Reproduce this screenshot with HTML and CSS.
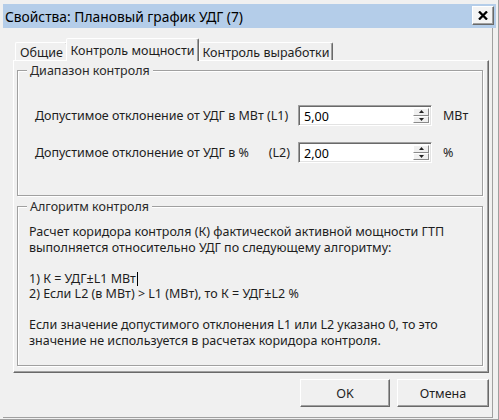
FILE: index.html
```html
<!DOCTYPE html>
<html lang="ru">
<head>
<meta charset="utf-8">
<title>Свойства: Плановый график УДГ (7)</title>
<link rel="stylesheet" href="styles.css">
</head>
<body>
<div class="window">
  <div class="titlebar">
    <span class="title">Свойства: Плановый график УДГ (7)</span>
    <button class="close" aria-label="Закрыть">
      <svg width="10" height="9" viewBox="0 0 10 9"><path d="M1 0.5 L9 8.5 M9 0.5 L1 8.5" stroke="#000" stroke-width="2.3" fill="none"/></svg>
    </button>
  </div>
  <div class="client">
    <div class="tabs">
      <div class="tab tab-general">Общие</div>
      <div class="tab tab-power active">Контроль мощности</div>
      <div class="tab tab-output">Контроль выработки</div>
    </div>
    <div class="panel">
      <div class="group group-range">
        <div class="legend">Диапазон контроля</div>
        <div class="rows">
          <div class="row">
            <div class="label"><span>Допустимое отклонение от УДГ в МВт (L1)</span></div>
            <div class="spin">
              <span class="value">5,00</span>
              <div class="spin-btns">
                <span class="spin-btn"><svg width="5" height="3" viewBox="0 0 5 3"><path d="M2.5 0 L5 3 L0 3 Z" fill="#222"/></svg></span>
                <span class="spin-btn"><svg width="5" height="3" viewBox="0 0 5 3"><path d="M0 0 L5 0 L2.5 3 Z" fill="#222"/></svg></span>
              </div>
            </div>
            <div class="unit">МВт</div>
          </div>
          <div class="row">
            <div class="label"><span>Допустимое отклонение от УДГ в %</span><span>(L2)</span></div>
            <div class="spin">
              <span class="value">2,00</span>
              <div class="spin-btns">
                <span class="spin-btn"><svg width="5" height="3" viewBox="0 0 5 3"><path d="M2.5 0 L5 3 L0 3 Z" fill="#222"/></svg></span>
                <span class="spin-btn"><svg width="5" height="3" viewBox="0 0 5 3"><path d="M0 0 L5 0 L2.5 3 Z" fill="#222"/></svg></span>
              </div>
            </div>
            <div class="unit">%</div>
          </div>
        </div>
      </div>
      <div class="group group-algo">
        <div class="legend">Алгоритм контроля</div>
        <div class="algo">
          <p>Расчет коридора контроля (К) фактической активной мощности ГТП<br>выполняется относительно УДГ по следующему алгоритму:</p>
          <p>1) К = УДГ±L1 МВт<span class="caret"></span><br>2) Если L2 (в МВт) &gt; L1 (МВт), то К = УДГ±L2 %</p>
          <p>Если значение допустимого отклонения L1 или L2 указано 0, то это<br>значение не используется в расчетах коридора контроля.</p>
        </div>
      </div>
    </div>
    <div class="buttons">
      <button class="btn btn-ok">OK</button>
      <button class="btn btn-cancel">Отмена</button>
    </div>
  </div>
</div>
</body>
</html>
```

FILE: styles.css
```css
* { box-sizing: border-box; }
html, body { margin: 0; padding: 0; }
body {
  width: 499px;
  height: 420px;
  overflow: hidden;
  background: #f0f0f0;
  font-family: "Noto Sans", "DejaVu Sans", sans-serif;
  font-size: 12.5px;
  color: #1e1e1e;
}
.window {
  width: 499px;
  height: 420px;
  padding: 4px 2px 1px 3px;
  background: #f0f0f0;
  border-right: 1px solid #a0a0a0;
  border-bottom: 1px solid #a0a0a0;
  display: flex;
  flex-direction: column;
}
.titlebar {
  flex: none;
  height: 24px;
  background: #b4cde9;
  display: flex;
  align-items: center;
  justify-content: space-between;
  padding: 0 2px 0 2px;
}
.title {
  font-size: 13.8px;
  color: #000;
  white-space: nowrap;
}
.close {
  width: 22px;
  height: 19px;
  margin-top: -1px;
  padding: 0;
  background: #f4f4f4;
  border: 1px solid;
  border-color: #fff #696969 #696969 #fff;
  box-shadow: inset -1px -1px 0 #a0a0a0;
  display: flex;
  align-items: center;
  justify-content: center;
}
.client {
  flex: 1;
  margin-right: 3px;
  border-right: 1px solid #a0a0a0;
  border-bottom: 1px solid #a0a0a0;
  padding: 10px 3px 10px 10px;
  display: flex;
  flex-direction: column;
}
.tabs {
  flex: none;
  height: 22px;
  display: flex;
  align-items: flex-end;
  padding-left: 2px;
}
.tab {
  height: 18px;
  border: 1px solid;
  border-bottom: none;
  border-color: #fff #696969 transparent #fff;
  box-shadow: inset -1px 0 0 #a0a0a0;
  border-radius: 2px 2px 0 0;
  display: flex;
  align-items: center;
  justify-content: center;
  padding-top: 2px;
  white-space: nowrap;
}
.tab-general { width: 53px; }
.tab-power { width: 133px; }
.tab-output { width: 134px; }
.tab.active {
  height: 23px;
  margin-bottom: -1px;
  margin-left: -2px;
  padding-top: 0;
  background: #f0f0f0;
  position: relative;
  z-index: 1;
}
.panel {
  flex: none;
  height: 313px;
  border: 1px solid;
  border-color: #fff #696969 #696969 #fff;
  box-shadow: inset -1px -1px 0 #a0a0a0;
  padding: 0 5px 0 3px;
  display: flex;
  flex-direction: column;
}
.group {
  border: 1px solid #a0a0a0;
  box-shadow: 1px 1px 0 #fff, inset 1px 1px 0 #fff;
}
.group-range {
  margin-top: 9px;
  height: 126px;
  flex: none;
}
.group-algo {
  margin-top: 10px;
  margin-bottom: 6px;
  flex: 1;
}
.legend {
  display: table;
  margin: -8px 0 0 9px;
  padding: 0 3px;
  line-height: 16px;
  background: #f0f0f0;
  color: #2a2a2a;
}
.rows {
  margin-top: 26px;
  padding-left: 17px;
  display: flex;
  flex-direction: column;
  gap: 16px;
}
.row {
  height: 21px;
  display: flex;
  align-items: center;
}
.label {
  width: 255px;
  margin-right: 8px;
  display: flex;
  justify-content: space-between;
  white-space: nowrap;
}
.spin {
  width: 134px;
  height: 21px;
  display: flex;
  align-items: stretch;
  justify-content: space-between;
  background: #fff;
  border: 1px solid;
  border-color: #a0a0a0 #fff #fff #a0a0a0;
  box-shadow: inset 1px 1px 0 #696969, inset -1px -1px 0 #e3e3e3;
  padding: 2px 2px 2px 5px;
}
.value {
  color: #000;
  line-height: 17px;
}
.spin-btns {
  width: 16px;
  display: flex;
  flex-direction: column;
}
.spin-btn {
  flex: 1;
  background: #f0f0f0;
  border: 1px solid;
  border-color: #fff #8a8a8a #8a8a8a #fff;
  display: flex;
  align-items: center;
  justify-content: center;
}
.spin-btn svg { display: block; }
.unit {
  margin-left: 11px;
}
.algo {
  margin-top: 9px;
  padding-left: 11px;
  line-height: 15.5px;
  white-space: nowrap;
}
.algo p {
  margin: 0 0 15.5px 0;
}
.caret {
  display: inline-block;
  width: 1px;
  height: 14px;
  background: #000;
  vertical-align: -3px;
  margin-left: 1px;
}
.buttons {
  flex: none;
  margin-top: 6px;
  display: flex;
  justify-content: flex-end;
  gap: 7px;
}
.btn {
  height: 28px;
  padding: 0;
  font: inherit;
  color: #1e1e1e;
  background: #f0f0f0;
  border: 1px solid;
  border-color: #fff #696969 #696969 #fff;
  box-shadow: inset -1px -1px 0 #a0a0a0;
}
.btn-ok { width: 90px; }
.btn-cancel { width: 92px; }
```
